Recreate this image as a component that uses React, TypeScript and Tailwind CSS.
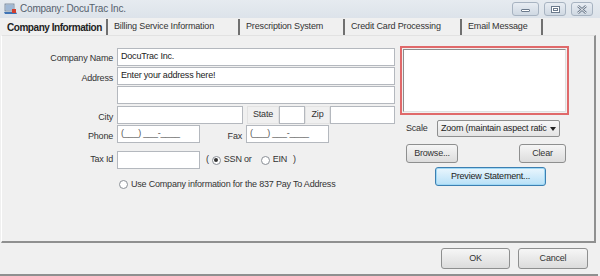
import React from "react";

const font = { fontFamily: '"Liberation Sans", Arial, sans-serif' };

const tabs = [
  { title: "Company Information", w: "w-[104px]", active: true },
  { title: "Billing Service Information", w: "w-[132px]" },
  { title: "Prescription System", w: "w-[105px]" },
  { title: "Credit Card Processing", w: "w-[117px]" },
  { title: "Email Message", w: "w-[81px]" },
];

const Input = ({ w, value, muted }: { w: string; value?: string; muted?: boolean }) => (
  <div
    className={`${w} h-[18px] bg-white border border-[#b4b8be] flex items-center px-[3px] text-[9px] tracking-[-0.2px] whitespace-nowrap ${
      muted ? "text-[#555]" : "text-[#222]"
    }`}
  >
    {value}
  </div>
);

const Label = ({ children, className = "" }: { children: React.ReactNode; className?: string }) => (
  <div className={`text-[9px] tracking-[-0.2px] text-[#333] text-right pr-[4px] whitespace-nowrap ${className}`}>
    {children}
  </div>
);

const Radio = ({ checked }: { checked?: boolean }) => (
  <span className="inline-flex w-[9px] h-[9px] rounded-full border border-[#8a8f96] bg-white items-center justify-center">
    {checked && <span className="w-[4px] h-[4px] rounded-full bg-[#333]" />}
  </span>
);

const Button = ({ children, className = "" }: { children: React.ReactNode; className?: string }) => (
  <div
    className={`rounded-[3px] border border-[#8e8f8f] bg-gradient-to-b from-[#f6f6f6] to-[#dcdcdc] flex items-center justify-center text-[9px] tracking-[-0.2px] text-[#333] ${className}`}
  >
    {children}
  </div>
);

const WinBtn = ({ children, className = "" }: { children: React.ReactNode; className?: string }) => (
  <div
    className={`h-[14px] rounded-[3px] border border-[#a7b3c1] bg-gradient-to-b from-[#e8edf3] to-[#cfd8e2] flex items-center justify-center ${className}`}
  >
    {children}
  </div>
);

export default function App() {
  return (
    <div style={font} className="w-[600px] h-[276px] bg-[#f0f0f0] overflow-hidden flex flex-col select-none">
      {/* title bar */}
      <div className="h-[18px] flex items-center bg-gradient-to-b from-[#e6ebf0] to-[#dde3ea] pl-[4px] pr-[7px]">
        <svg width="13" height="12" viewBox="0 0 13 12" className="mr-[3px]">
          <rect x="1" y="1" width="9" height="7" fill="#c9d6e6" stroke="#6d7f95" strokeWidth="0.8" />
          <rect x="2" y="2" width="7" height="5" fill="#9fb8d6" />
          <path d="M0 9 L12 9 L13 11 L1 11 Z" fill="#3f74b5" />
          <rect x="8" y="6" width="4" height="4" fill="#d23f2f" />
        </svg>
        <span className="text-[10px] tracking-[-0.2px] text-[#56616d] leading-none">Company: DocuTrac Inc.</span>
        <div className="ml-auto flex items-center gap-[5px]">
          <WinBtn className="w-[27px]">
            <span className="w-[9px] h-[3px] border border-[#6b7a8c] bg-white rounded-[1px] mt-[3px]" />
          </WinBtn>
          <WinBtn className="w-[22px]">
            <span className="w-[9px] h-[7px] border border-[#6b7a8c] bg-white flex items-center justify-center">
              <span className="w-[5px] h-[3px] border border-[#6b7a8c]" />
            </span>
          </WinBtn>
          <WinBtn className="w-[22px]">
            <svg width="10" height="9" viewBox="0 0 10 9">
              <path d="M1 1 L9 8 M9 1 L1 8" stroke="#6b7a8c" strokeWidth="2.4" />
              <path d="M1 1 L9 8 M9 1 L1 8" stroke="#ffffff" strokeWidth="0.9" />
            </svg>
          </WinBtn>
        </div>
      </div>

      {/* tabs */}
      <div className="h-[17px] flex items-end pl-[4px] pr-[3px]">
        {tabs.map((t) => (
          <div
            key={t.title}
            className={`${t.w} h-[16px] flex items-center border-r-2 border-[#707070] whitespace-nowrap ${
              t.active
                ? "font-bold text-[10px] tracking-[-0.45px] text-[#222] pl-[3px]"
                : "text-[9px] tracking-[-0.15px] text-[#333] pl-[6px]"
            }`}
          >
            {t.title}
          </div>
        ))}
      </div>

      {/* panel */}
      <div className="h-[208px] ml-[1px] mr-[4px] border-l border-l-white border-r-2 border-r-[#8f9090] border-b-2 border-b-[#8f9090] border-t border-t-[#e2e2e2] flex">
        {/* left form */}
        <div className="w-[396px] flex flex-col pt-[12px]">
          <div className="flex items-end">
            <Label className="w-[115px] mb-[1px]">Company Name</Label>
            <Input w="w-[278px]" value="DocuTrac Inc." />
          </div>
          <div className="flex items-end mt-[1px]">
            <Label className="w-[115px]">Address</Label>
            <Input w="w-[278px]" value="Enter your address here!" />
          </div>
          <div className="flex items-end mt-[1px]">
            <div className="w-[115px]" />
            <Input w="w-[278px]" />
          </div>
          <div className="flex items-end mt-[2px]">
            <Label className="w-[115px]">City</Label>
            <Input w="w-[126px]" />
            <div className="w-[32px] h-[18px] ml-[4px] border border-[#e2e2e2] text-[9px] tracking-[-0.2px] text-[#333] flex items-end justify-center pb-[2px]">
              State
            </div>
            <Input w="w-[26px]" />
            <div className="w-[25px] h-[18px] border border-[#e2e2e2] text-[9px] tracking-[-0.2px] text-[#333] flex items-end justify-center pb-[2px]">
              Zip
            </div>
            <Input w="w-[65px]" />
          </div>
          <div className="flex items-end mt-[1px]">
            <Label className="w-[115px]">Phone</Label>
            <Input w="w-[83px]" value="(___) ___-____" muted />
            <Label className="w-[46px]">Fax</Label>
            <Input w="w-[83px]" value="(___) ___-____" muted />
          </div>
          <div className="flex items-center mt-[8px]">
            <Label className="w-[115px]">Tax Id</Label>
            <Input w="w-[83px]" />
            <div className="flex items-center text-[9px] tracking-[-0.2px] text-[#333] ml-[6px] gap-[3px]">
              <span>(</span>
              <Radio checked />
              <span className="mr-[6px]">SSN or</span>
              <Radio />
              <span>EIN</span>
              <span className="ml-[3px]">)</span>
            </div>
          </div>
          <div className="flex items-center mt-[9px] pl-[117px] gap-[3px] text-[9px] tracking-[-0.2px] text-[#333]">
            <Radio />
            <span>Use Company information for the 837 Pay To Address</span>
          </div>
        </div>

        {/* right column */}
        <div className="flex flex-col pt-[10px] pl-[2px]">
          <div className="w-[169px] h-[69px] border-2 border-[#e0696a] p-[1px]">
            <div className="w-full h-full bg-white border border-[#8d8d8d] border-r-[#e0e0e0] border-b-[#e0e0e0]" />
          </div>
          <div className="flex items-center mt-[5px] pl-[6px]">
            <span className="text-[9px] tracking-[-0.2px] text-[#333] w-[31px]">Scale</span>
            <div className="w-[123px] h-[17px] border border-[#8e8f8f] rounded-[2px] bg-gradient-to-b from-[#f7f7f7] to-[#e4e4e4] flex items-center pl-[3px] text-[9px] tracking-[-0.2px] text-[#222]">
              <span className="flex-1 whitespace-nowrap">Zoom (maintain aspect ratic</span>
              <svg width="12" height="8" viewBox="0 0 12 8" className="shrink-0">
                <path d="M3 2 L9 2 L6 6 Z" fill="#222" />
              </svg>
            </div>
          </div>
          <div className="flex items-center justify-between mt-[7px] pl-[6px] pr-[3px]">
            <Button className="w-[52px] h-[19px]">Browse...</Button>
            <Button className="w-[47px] h-[19px]">Clear</Button>
          </div>
          <div className="mt-[4px] pl-[35px]">
            <div className="w-[111px] h-[19px] rounded-[3px] border border-[#3c7fb1] bg-gradient-to-b from-[#eaf6fd] to-[#b7e0f7] flex items-center justify-center text-[9px] tracking-[-0.2px] text-[#222] shadow-[inset_0_0_0_1px_#9fd8f5]">
              Preview Statement...
            </div>
          </div>
        </div>
      </div>

      {/* bottom bar */}
      <div className="flex-1 mr-[2px] border-b-2 border-[#8f9090] flex items-center justify-end gap-[8px] pr-[10px]">
        <Button className="w-[69px] h-[21px]">OK</Button>
        <Button className="w-[70px] h-[21px]">Cancel</Button>
      </div>
    </div>
  );
}
